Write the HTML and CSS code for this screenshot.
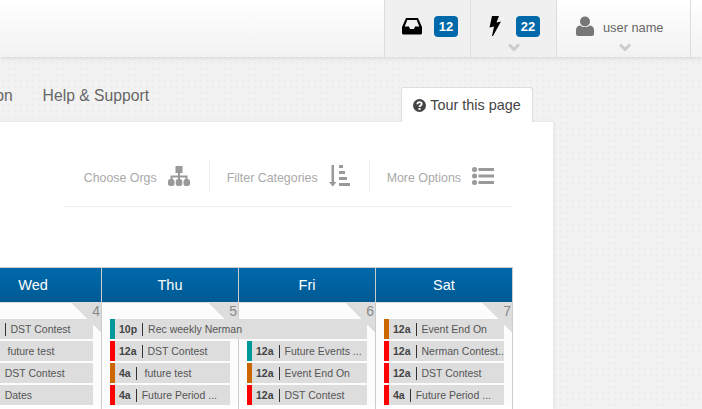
FILE: index.html
```html
<!DOCTYPE html>
<html lang="en">
<head>
  <meta charset="UTF-8">
  <title>Calendar</title>
  <link rel="stylesheet" href="styles.css">
</head>
<body>
  <header class="topbar">
    <div class="top-item top-grey">
      <div class="top-row">
        <svg class="top-icon" width="20" height="18" viewBox="0 0 20 18"><path fill="#000" d="M4 1h12l4 9v6a1.500 1.500 0 0 1-1.500 1.500h-17A1.500 1.500 0 0 1 0 16v-6zM5.300 3 2.700 9.500H7l1 2.500h4l1-2.500h4.300L14.700 3z"/></svg>
        <span class="badge">12</span>
      </div>
    </div>
    <div class="top-item top-grey top-bolt">
      <div class="top-row">
        <svg class="top-icon" width="20" height="22" viewBox="0 0 20 22"><path fill="#000" d="M7 1h7l-2.500 6.500 4.500-1L8 21H7l2-9.500-4.500 1z"/></svg>
        <span class="badge">22</span>
      </div>
      <svg class="chevron" width="14" height="8" viewBox="0 0 14 8"><path fill="none" stroke="#ccc" stroke-width="3" d="M2 1.500l5 5 5-5"/></svg>
    </div>
    <div class="top-item top-user">
      <div class="top-row">
        <svg width="18" height="20" viewBox="0 0 18 20"><circle cx="9" cy="5.500" r="5" fill="#777"/><path fill="#777" d="M0 18v-4c0-3 2-4.500 4.500-4.500 1 1 2.500 1.500 4.500 1.500s3.500-.5 4.500-1.500c2.500 0 4.500 1.500 4.500 4.500v4a2 2 0 0 1-2 2H2a2 2 0 0 1-2-2z"/></svg>
        <span class="user-name">user name</span>
      </div>
      <svg class="chevron" width="14" height="8" viewBox="0 0 14 8"><path fill="none" stroke="#ccc" stroke-width="3" d="M2 1.500l5 5 5-5"/></svg>
    </div>
  </header>

  <div class="subnav">
    <nav class="nav-links">
      <a>Information</a>
      <a>Help &amp; Support</a>
    </nav>
    <div class="tour-tab">
      <svg width="13" height="13" viewBox="0 0 13 13"><circle cx="6.500" cy="6.500" r="6.500" fill="#444"/><path fill="none" stroke="#fff" stroke-width="1.800" d="M4.300 5.200c0-1.300 1-2 2.200-2s2.200.7 2.200 1.800c0 1.500-2.200 1.500-2.200 3"/><rect x="5.500" y="9" width="2" height="1.900" fill="#fff"/></svg>
      <span>Tour this page</span>
    </div>
  </div>

  <main class="panel">
    <div class="tools">
      <div class="tool">
        <span>Choose Orgs</span>
        <svg width="22" height="20" viewBox="0 0 22 20"><path fill="#999" d="M7.500 0h7v7H12v2.500h7.500V14h-2v-2.500H12V14h-2v-2.500H4.500V14h-2V9.500H10V7H7.500z"/><rect x="0" y="13" width="6.500" height="7" rx="2.500" fill="#999"/><rect x="7.750" y="13" width="6.500" height="7" rx="2.500" fill="#999"/><rect x="15.500" y="13" width="6.500" height="7" rx="2.500" fill="#999"/></svg>
      </div>
      <div class="tool">
        <span>Filter Categories</span>
        <svg width="21" height="22" viewBox="0 0 21 22"><path fill="#999" d="M2.500 0h2.500v17h2.500l-3.750 4.500L0 17h2.500z"/><rect x="10" y="0" width="4" height="3" fill="#999"/><rect x="10" y="6" width="6" height="3" fill="#999"/><rect x="10" y="12" width="8" height="3" fill="#999"/><rect x="10" y="18" width="11" height="3" fill="#999"/></svg>
      </div>
      <div class="tool">
        <span>More Options</span>
        <svg width="22" height="18" viewBox="0 0 22 18"><circle cx="2.500" cy="2.500" r="2.500" fill="#999"/><circle cx="2.500" cy="9" r="2.500" fill="#999"/><circle cx="2.500" cy="15.500" r="2.500" fill="#999"/><rect x="6.500" y="1" width="15.500" height="3" fill="#999"/><rect x="6.500" y="7.500" width="15.500" height="3" fill="#999"/><rect x="6.500" y="14" width="15.500" height="3" fill="#999"/></svg>
      </div>
    </div>

    <div class="calendar">
      <div class="day-head">Wed</div>
      <div class="day-head">Thu</div>
      <div class="day-head">Fri</div>
      <div class="day-head">Sat</div>

      <div class="week">
        <div class="day-num"><span>4</span></div>
        <div class="day-num"><span>5</span></div>
        <div class="day-num"><span>6</span></div>
        <div class="day-num"><span>7</span></div>

        <div class="event wed"><i class="c-teal"></i><b>12a</b><em></em><span>DST Contest</span></div>
        <div class="event thu span2"><i class="c-teal"></i><b>10p</b><em></em><span>Rec weekly Nerman</span></div>
        <div class="event sat"><i class="c-orange"></i><b>12a</b><em></em><span>Event End On</span></div>

        <div class="event wed"><i class="c-orange"></i><b>4a</b><em></em><span>&nbsp;future test</span></div>
        <div class="event thu"><i class="c-red"></i><b>12a</b><em></em><span>DST Contest</span></div>
        <div class="event fri"><i class="c-teal"></i><b>12a</b><em></em><span>Future Events ...</span></div>
        <div class="event sat"><i class="c-red"></i><b>12a</b><em></em><span>Nerman Contest...</span></div>

        <div class="event wed"><i class="c-red"></i><b>4a</b><em></em><span>DST Contest</span></div>
        <div class="event thu"><i class="c-orange"></i><b>4a</b><em></em><span>&nbsp;future test</span></div>
        <div class="event fri"><i class="c-orange"></i><b>12a</b><em></em><span>Event End On</span></div>
        <div class="event sat"><i class="c-red"></i><b>12a</b><em></em><span>DST Contest</span></div>

        <div class="event wed"><i class="c-red"></i><b>4a</b><em></em><span>Dates</span></div>
        <div class="event thu"><i class="c-red"></i><b>4a</b><em></em><span>Future Period ...</span></div>
        <div class="event fri"><i class="c-red"></i><b>12a</b><em></em><span>DST Contest</span></div>
        <div class="event sat"><i class="c-red"></i><b>4a</b><em></em><span>Future Period ...</span></div>
      </div>
    </div>
  </main>
</body>
</html>
```

FILE: styles.css
```css
* {
  box-sizing: border-box;
}

html, body {
  height: 409px;
  overflow: hidden;
}

body {
  margin: 0;
  font-family: "Liberation Sans", Arial, sans-serif;
  background-color: #f2f2f2;
  background-image: radial-gradient(circle, #ececec 1px, transparent 1.500px);
  background-size: 6px 6px;
}

/* top bar */
.topbar {
  height: 57px;
  display: flex;
  justify-content: flex-end;
  padding-right: 11px;
  background: linear-gradient(#fff, #f2f2f2);
  box-shadow: 0 1px 5px rgba(0, 0, 0, 0.12);
}

.top-item {
  display: flex;
  flex-direction: column;
  align-items: center;
  border-left: 1px solid #ddd;
  padding-top: 14px;
}

.top-grey {
  width: 86px;
  background: #f0f0f0;
}

.top-user {
  width: 135px;
  border-right: 1px solid #ddd;
}

.top-row {
  align-self: stretch;
  height: 24px;
  display: flex;
  align-items: center;
  padding-left: 17px;
}

.top-bolt .top-row {
  padding-left: 14px;
}

.top-user .top-row {
  padding-left: 19px;
}

.top-icon {
  margin-right: 12px;
}

.top-bolt .top-icon {
  margin-right: 11px;
}

.badge {
  width: 24px;
  height: 21px;
  border-radius: 4px;
  background: #0069aa;
  color: #fff;
  font-size: 13px;
  font-weight: bold;
  line-height: 21px;
  text-align: center;
}

.user-name {
  margin: 3px 0 0 9px;
  font-size: 12.800px;
  color: #666;
}

.chevron {
  margin-top: 5px;
}

.top-user .chevron {
  margin-left: 3px;
}

/* nav row */
.subnav {
  height: 65px;
  display: flex;
  align-items: flex-end;
}

.nav-links {
  width: 149px;
  height: 100%;
  display: flex;
  justify-content: flex-end;
  gap: 30px;
  padding-top: 30px;
  white-space: nowrap;
  font-size: 15.700px;
  color: #666;
}

.tour-tab {
  margin-left: 252px;
  width: 132px;
  height: 35px;
  display: flex;
  align-items: center;
  justify-content: center;
  gap: 4px;
  background: #fff;
  border: 1px solid #ddd;
  border-bottom: none;
  border-radius: 3px 3px 0 0;
  font-size: 14.400px;
  color: #444;
}

/* main panel */
.panel {
  margin-left: -50px;
  width: 603px;
  height: 300px;
  padding: 39px 40px 0 15px;
  background: #fff;
  box-shadow: 0 0 4px rgba(0, 0, 0, 0.08);
}

.tools {
  margin-left: 99px;
  margin-right: 1px;
  height: 46px;
  display: flex;
  justify-content: flex-end;
  align-items: flex-start;
  padding-right: 18px;
  border-bottom: 1px solid #eee;
  font-size: 12.400px;
  color: #aaa;
  white-space: nowrap;
}

.tool {
  height: 30px;
  display: flex;
  align-items: center;
  gap: 11px;
  padding-left: 17px;
  margin-left: 19px;
  border-left: 1px solid #eee;
}

.tool:first-child {
  border-left: none;
}

.tool span {
  margin-top: 4px;
}

/* calendar */
.calendar {
  margin-top: 60px;
  display: grid;
  grid-template-columns: repeat(4, 137px);
}

.day-head {
  height: 36px;
  border-top: 1px solid #ccc;
  border-right: 1px solid #ccc;
  border-bottom: 1px solid #ddd;
  background: linear-gradient(#0069aa, #005a94);
  color: #fff;
  font-size: 14.500px;
  line-height: 34px;
  text-align: center;
}

.week {
  grid-column: 1 / -1;
  position: relative;
  display: grid;
  grid-template-columns: repeat(4, 137px);
  grid-auto-rows: 20px;
  row-gap: 2px;
  padding-top: 16px;
  background: #fcfcfc;
}

.day-num {
  position: absolute;
  top: 0;
  height: 120px;
  width: 137px;
  border-right: 1px solid #ccc;
  font-size: 14px;
  color: #888;
  text-align: right;
  background: linear-gradient(225deg, #ddd 0, #ddd 21px, transparent 21px) no-repeat right top / 30px 30px;
}

.day-num:nth-child(1) { left: 0; }
.day-num:nth-child(2) { left: 137px; }
.day-num:nth-child(3) { left: 274px; }
.day-num:nth-child(4) { left: 411px; }

.day-num span {
  margin-right: 1px;
}

.event {
  position: relative;
  margin: 0 9px 0 8px;
  display: flex;
  align-items: center;
  overflow: hidden;
  white-space: nowrap;
  background: #ddd;
  color: #555;
  font-size: 10.500px;
}

.event i {
  width: 5px;
  height: 100%;
  flex: none;
  margin-right: 4px;
}

.event b {
  flex: none;
  color: #444;
}

.event em {
  flex: none;
  width: 1px;
  height: 13px;
  margin: 0 5px;
  background: #333;
}

.wed { grid-column: 1; }
.thu { grid-column: 2; }
.fri { grid-column: 3; }
.sat { grid-column: 4; }
.span2 { grid-column: 2 / span 2; }

.c-red { background: #f00; }
.c-orange { background: #c60; }
.c-teal { background: #099; }
```
